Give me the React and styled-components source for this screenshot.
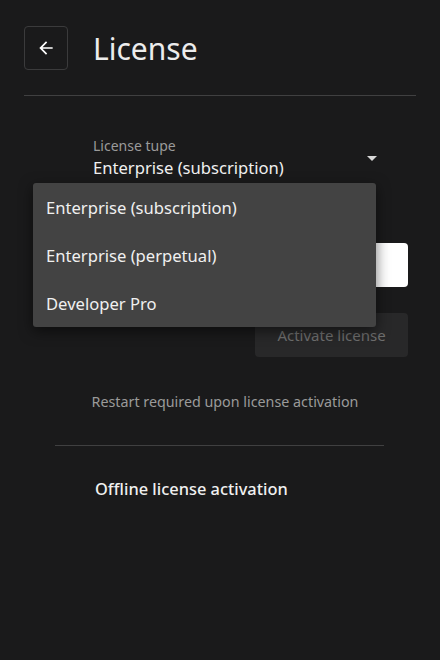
import React from 'react'
import styled, { createGlobalStyle } from 'styled-components'

const GlobalStyle = createGlobalStyle`
  body {
    margin: 0;
    background: #1a1a1b;
    font-family: "Noto Sans", "Open Sans", sans-serif;
    color: #ececec;
  }
`

const Page = styled.div`
  padding: 26px 24px;
  min-height: 660px;
  box-sizing: border-box;
`

const Header = styled.div`
  display: flex;
  align-items: center;
  gap: 25px;
  height: 44px;
`

const BackButton = styled.button`
  width: 44px;
  height: 44px;
  display: flex;
  align-items: center;
  justify-content: center;
  background: transparent;
  border: 1.5px solid #3b3b3c;
  border-radius: 4px;
  padding: 0;
  color: #fff;
`

const Title = styled.h1`
  margin: 0;
  font-size: 30px;
  font-weight: 400;
  color: #ececec;
`

const Divider = styled.hr`
  border: none;
  height: 1px;
  background: #404041;
  margin: ${p => p.$margin};
`

const Form = styled.div`
  display: flex;
  flex-direction: column;
  padding-right: 8px;
`

const SelectField = styled.div`
  position: relative;
  margin: 40px 23px 0 69px;
  display: flex;
  align-items: center;
  justify-content: space-between;
`

const SelectLabel = styled.div`
  font-size: 14px;
  line-height: 19px;
  color: #9a9a9a;
`

const SelectValue = styled.div`
  font-size: 16.6px;
  line-height: 25px;
  color: #f0f0f0;
`

const Caret = styled.span`
  width: 0;
  height: 0;
  border-left: 5px solid transparent;
  border-right: 5px solid transparent;
  border-top: 5px solid #d8d8d8;
  margin-right: 8px;
`

const Menu = styled.ul`
  position: absolute;
  left: -60px;
  top: 47px;
  width: 343px;
  margin: 0;
  padding: 0;
  list-style: none;
  background: #434343;
  border-radius: 3px;
  box-shadow: 0 4px 14px rgba(0, 0, 0, 0.55);
  z-index: 2;
`

const MenuItem = styled.li`
  height: 48px;
  display: flex;
  align-items: center;
  padding-left: 13px;
  font-size: 16.6px;
  color: #f0f0f0;
  padding-top: 1px;
  box-sizing: border-box;
`

const KeyInput = styled.input`
  box-sizing: border-box;
  margin: 63px 0 0 31px;
  height: 44px;
  padding: 0 12px;
  border: none;
  border-radius: 4px;
  background: #fff;
  outline: none;
`

const ActivateButton = styled.button`
  align-self: flex-end;
  margin-top: 26px;
  width: 153px;
  height: 44px;
  border: none;
  border-radius: 4px;
  background: #282829;
  color: #6f6f6f;
  font-family: inherit;
  font-size: 15px;
`

const Note = styled.p`
  margin: 36px 0 0;
  padding-left: 10px;
  text-align: center;
  font-size: 14.3px;
  line-height: 18px;
  color: #9a9a9a;
`

const LinkTitle = styled.div`
  margin: 32px 0 0 71px;
  font-size: 16.4px;
  line-height: 22px;
  font-weight: 500;
  color: #f0f0f0;
`

const options = ['Enterprise (subscription)', 'Enterprise (perpetual)', 'Developer Pro']

function ArrowBack() {
  return (
    <svg width="20" height="20" viewBox="0 0 24 24" fill="currentColor">
      <path d="M20 11H7.83l5.59-5.59L12 4l-8 8 8 8 1.41-1.41L7.83 13H20v-2z" />
    </svg>
  )
}

export default function App() {
  return (
    <Page>
      <GlobalStyle />
      <Header>
        <BackButton>
          <ArrowBack />
        </BackButton>
        <Title>License</Title>
      </Header>
      <Divider $margin="25px 0 0" />
      <Form>
        <SelectField>
          <div>
            <SelectLabel>License tupe</SelectLabel>
            <SelectValue>{options[0]}</SelectValue>
          </div>
          <Caret />
          <Menu>
            {options.map(o => (
              <MenuItem key={o}>{o}</MenuItem>
            ))}
          </Menu>
        </SelectField>
        <KeyInput />
        <ActivateButton>Activate license</ActivateButton>
      </Form>
      <Note>Restart required upon license activation</Note>
      <Divider $margin="34px 32px 0 31px" />
      <LinkTitle>Offline license activation</LinkTitle>
    </Page>
  )
}
